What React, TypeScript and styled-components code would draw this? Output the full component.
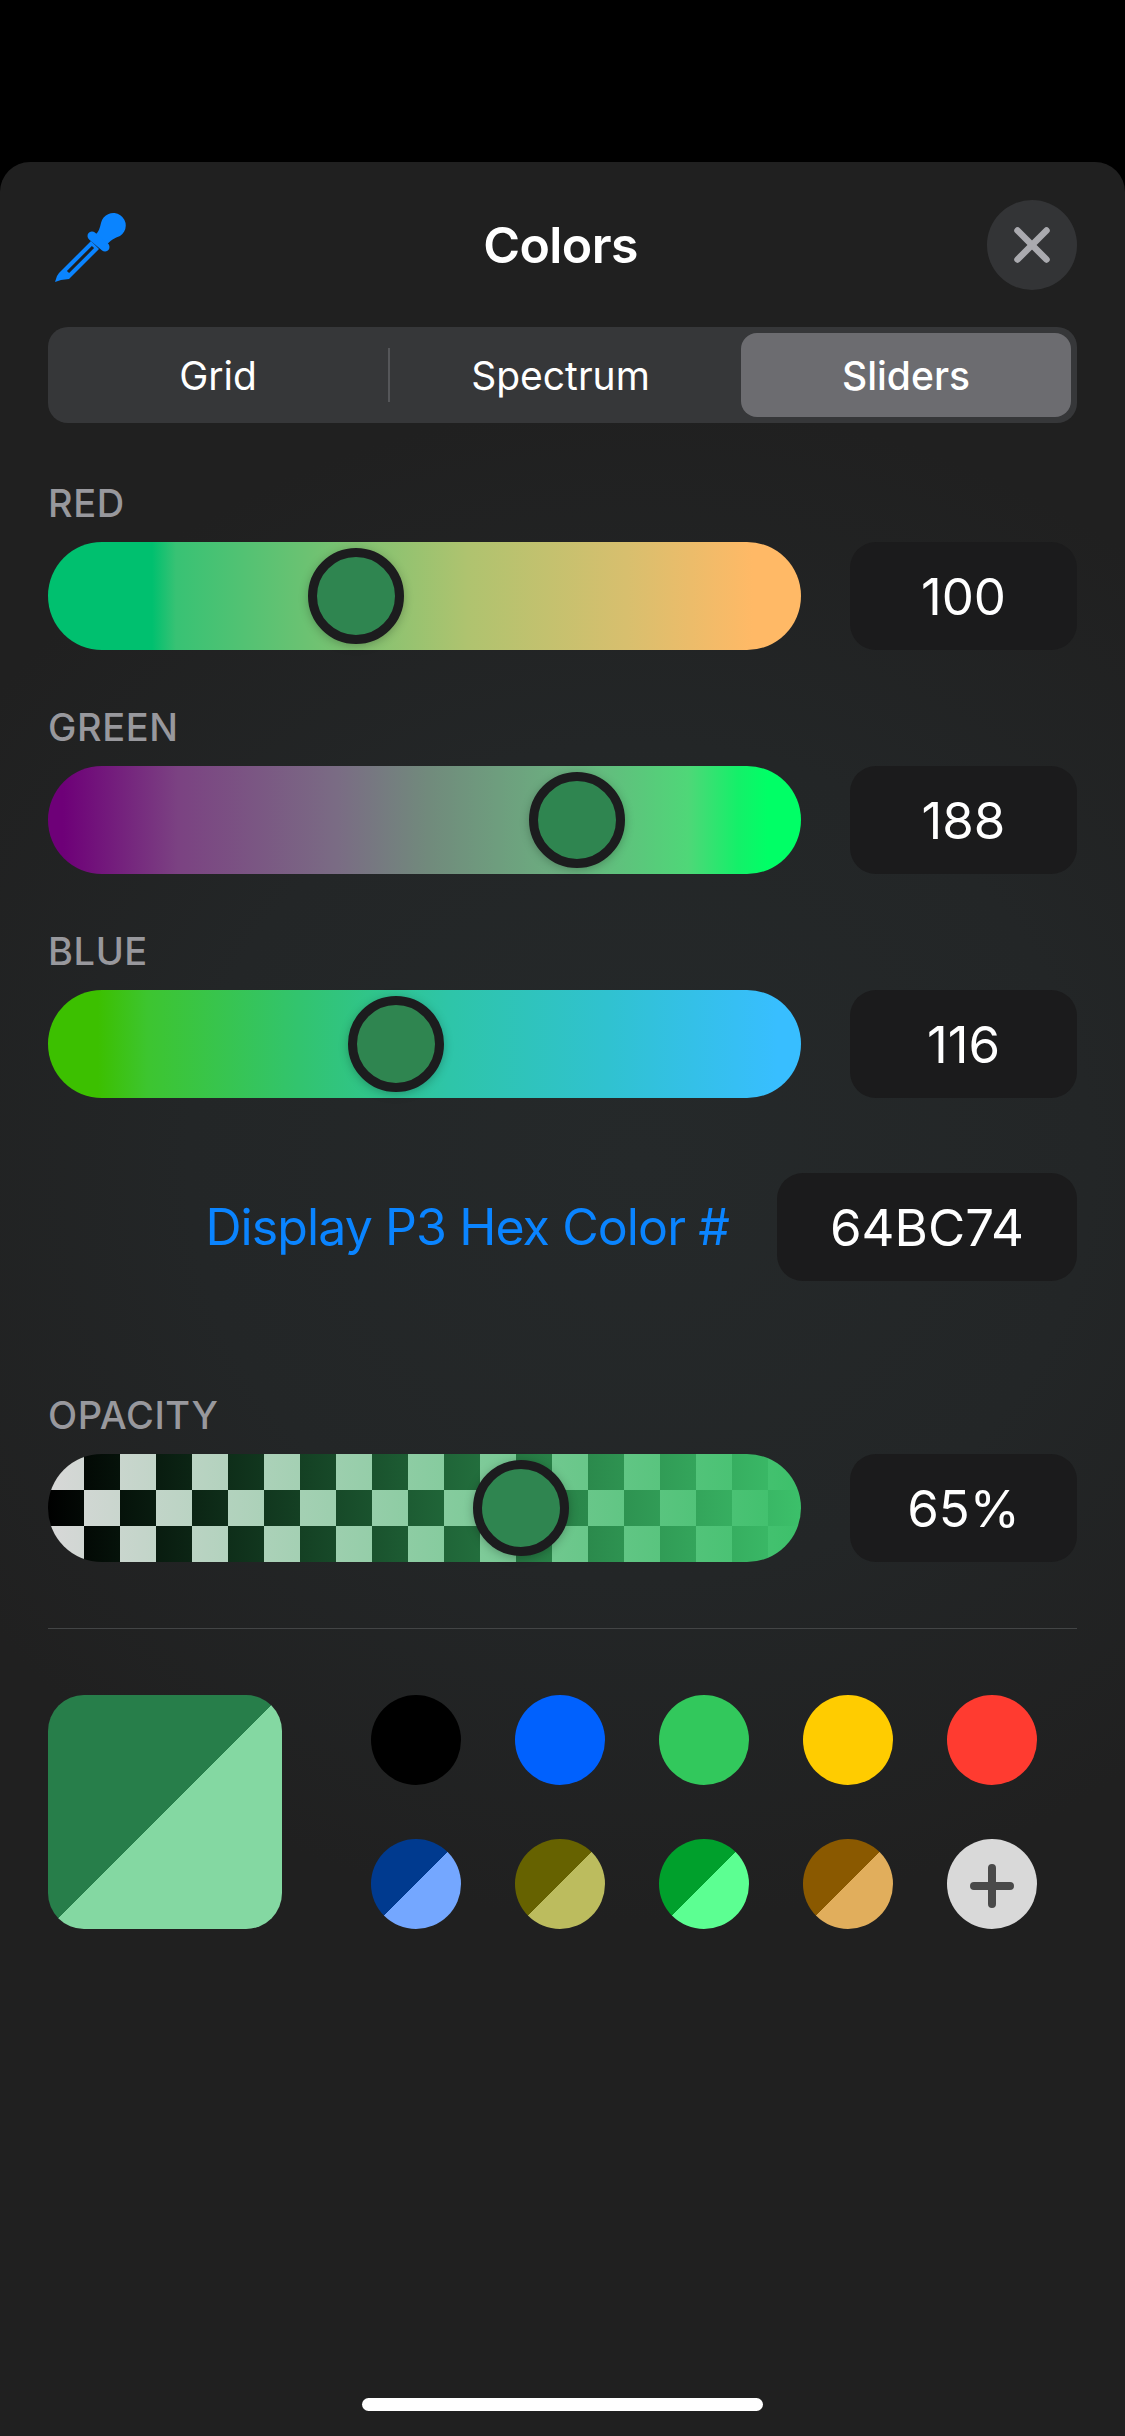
import React from "react";
import styled, { createGlobalStyle } from "styled-components";

const Global = createGlobalStyle`
  html, body { margin: 0; padding: 0; background: #000; }
  body { font-family: Inter, "Liberation Sans", sans-serif; }
`;

const Page = styled.div`
  width: 1125px;
  height: 2436px;
  padding-top: 162px;
  box-sizing: border-box;
  background: #000;
  overflow: hidden;
`;

const Sheet = styled.main`
  height: 2274px;
  box-sizing: border-box;
  padding: 38px 48px 25px;
  border-radius: 30px 30px 0 0;
  background-color: #202020;
  background-image: radial-gradient(ellipse 820px 760px at 640px 1000px, #25292a 0%, #232627 55%, #202020 100%);
  display: flex;
  flex-direction: column;
`;

const Header = styled.header`
  height: 90px;
  display: flex;
  align-items: center;
  justify-content: space-between;
`;

const HeaderSlot = styled.div`
  width: 90px;
  height: 90px;
  display: flex;
  align-items: center;
`;

const Title = styled.h1`
  margin: 0 4px 0 0;
  font-size: 50px;
  font-weight: 600;
  letter-spacing: -0.6px;
  color: #fff;
`;

const CloseButton = styled.button`
  width: 90px;
  height: 90px;
  padding: 0;
  border: 0;
  border-radius: 50%;
  background: #333436;
  display: flex;
  align-items: center;
  justify-content: center;
`;

const Segments = styled.nav`
  margin-top: 37px;
  height: 96px;
  box-sizing: border-box;
  padding: 6px;
  border-radius: 20px;
  background: #363739;
  display: grid;
  grid-template-columns: 336px 351px 330px;
`;

const Segment = styled.div<{ $active?: boolean; $divider?: boolean; $shift?: number }>`
  position: relative;
  box-sizing: border-box;
  padding-right: ${(p) => p.$shift ?? 0}px;
  display: flex;
  align-items: center;
  justify-content: center;
  font-size: 39px;
  font-weight: ${(p) => (p.$active ? 500 : 400)};
  color: #fff;
  border-radius: 16px;
  background: ${(p) => (p.$active ? "#6c6c70" : "transparent")};
  ${(p) =>
    p.$divider &&
    `&::after { content: ""; position: absolute; right: 0; top: 15px; bottom: 15px; width: 2px; background: #555659; }`}
`;

const Group = styled.section<{ $top: number }>`
  margin-top: ${(p) => p.$top}px;
`;

const Label = styled.div`
  height: 40px;
  line-height: 40px;
  margin-bottom: 19px;
  font-size: 38px;
  font-weight: 500;
  letter-spacing: 0.6px;
  color: #98989d;
`;

const SliderRow = styled.div`
  display: flex;
  justify-content: space-between;
`;

const Track = styled.div<{ $bg: string }>`
  position: relative;
  width: 753px;
  height: 108px;
  border-radius: 54px;
  background: ${(p) => p.$bg};
`;

const Thumb = styled.div<{ $x: number }>`
  position: absolute;
  left: ${(p) => p.$x - 48}px;
  top: 54px;
  width: 96px;
  height: 96px;
  box-sizing: border-box;
  transform: translate(-50%, -50%);
  border-radius: 50%;
  border: 9px solid #1c1c1e;
  background: #2f8550;
  box-shadow: 0 2px 10px rgba(0, 0, 0, 0.25);
`;

const ValueBox = styled.div<{ $wide?: boolean }>`
  width: ${(p) => (p.$wide ? 300 : 227)}px;
  height: 108px;
  border-radius: 26px;
  background: #1b1b1c;
  color: #fff;
  font-size: 51px;
  display: flex;
  align-items: center;
  justify-content: center;
`;

const HexRow = styled.div`
  margin-top: 75px;
  display: flex;
  justify-content: flex-end;
  align-items: center;
  gap: 48px;
`;

const HexLabel = styled.div`
  font-size: 50px;
  letter-spacing: -0.9px;
  color: #0a84ff;
`;

const Rule = styled.hr`
  margin: 66px 0 66px;
  border: 0;
  height: 1px;
  background: #434546;
`;

const Bottom = styled.div`
  display: flex;
  gap: 89px;
`;

const BigSwatch = styled.div`
  width: 234px;
  height: 234px;
  border-radius: 36px;
  background: linear-gradient(135deg, #277e4a 50%, #84d8a2 50%);
`;

const Palette = styled.div`
  display: grid;
  grid-template-columns: repeat(5, 90px);
  grid-auto-rows: 90px;
  column-gap: 54px;
  row-gap: 54px;
`;

const Dot = styled.div<{ $a: string; $b?: string }>`
  width: 90px;
  height: 90px;
  border-radius: 50%;
  background: ${(p) =>
    p.$b ? `linear-gradient(135deg, ${p.$a} 50%, ${p.$b} 50%)` : p.$a};
`;

const AddDot = styled.button`
  width: 90px;
  height: 90px;
  padding: 0;
  border: 0;
  border-radius: 50%;
  background: #d9d9d9;
  display: flex;
  align-items: center;
  justify-content: center;
`;

const HomeBar = styled.div`
  margin: auto auto 0;
  width: 401px;
  height: 13px;
  border-radius: 7px;
  background: #fff;
`;

const checker =
  "linear-gradient(to right, rgba(60,192,106,0) 0%, rgba(60,192,106,1) 100%), conic-gradient(#000 25%, #d8d8d8 0 50%, #000 0 75%, #d8d8d8 0) 0 0 / 72px 72px";

const sliders = [
  {
    name: "RED",
    value: "100",
    x: 356,
    bg: "linear-gradient(to right, #00c06f 0, #00c06f 104px, #38c274 128px, #6cc272 260px, #afc36f 420px, #d8bf6e 580px, #ffb966 705px, #ffb966 100%)",
  },
  {
    name: "GREEN",
    value: "188",
    x: 577,
    bg: "linear-gradient(to right, #6e0078 0, #6e0078 15px, #7b4282 130px, #7a6c84 290px, #718a7c 380px, #6bb180 520px, #4fd778 640px, #14f069 690px, #00ff66 720px, #00ff66 100%)",
  },
  {
    name: "BLUE",
    value: "116",
    x: 396,
    bg: "linear-gradient(to right, #3cc000 0, #3cc000 50px, #3dc530 100px, #32c46e 250px, #2ec5a8 400px, #30c2d0 560px, #38beff 730px, #38beff 100%)",
  },
];

const swatches: [string, string?][] = [
  ["#000000"],
  ["#0061fe"],
  ["#32c85c"],
  ["#ffcc00"],
  ["#ff3b30"],
  ["#003a8f", "#74a7ff"],
  ["#666200", "#bcbc5e"],
  ["#00a02c", "#5cff92"],
  ["#8a5900", "#e1ae5c"],
];

const Eyedropper = () => (
  <svg width="80" height="76" viewBox="20 18 80 76" style={{ marginLeft: 2, marginTop: 8 }}>
    <g fill="#0a84ff">
      <path d="M65 42 C69 39 70 34 71 30 A12.5 12.5 0 1 1 90 43 C85 45 80 47 76 53 Z" />
      <path
        fillRule="evenodd"
        d="M61 48 L69 56 L39 86 L31 87 L25 89 L27 83 L29 80 Z M61.9 52.9 L64.1 55.1 L39.1 80.1 L36.9 77.9 Z"
      />
    </g>
    <path d="M62 43 L75 54" stroke="#0a84ff" strokeWidth="9" strokeLinecap="round" />
  </svg>
);

const CloseIcon = () => (
  <svg width="40" height="40" viewBox="0 0 40 40">
    <path d="M5.5 5.5 L34.5 34.5 M34.5 5.5 L5.5 34.5" stroke="#aaaaaf" strokeWidth="6.5" strokeLinecap="round" />
  </svg>
);

const PlusIcon = () => (
  <svg width="44" height="44" viewBox="0 0 44 44" style={{ marginTop: 3 }}>
    <path d="M22 4 V40 M4 22 H40" stroke="#4a4a4a" strokeWidth="8" strokeLinecap="round" />
  </svg>
);

export default function App() {
  return (
    <Page>
      <Global />
      <Sheet>
        <Header>
          <HeaderSlot>
            <Eyedropper />
          </HeaderSlot>
          <Title>Colors</Title>
          <CloseButton aria-label="Close">
            <CloseIcon />
          </CloseButton>
        </Header>

        <Segments>
          <Segment $divider $shift={8}>Grid</Segment>
          <Segment $shift={10}>Spectrum</Segment>
          <Segment $active>Sliders</Segment>
        </Segments>

        {sliders.map((s, i) => (
          <Group key={s.name} $top={i === 0 ? 60 : 57}>
            <Label>{s.name}</Label>
            <SliderRow>
              <Track $bg={s.bg}>
                <Thumb $x={s.x} />
              </Track>
              <ValueBox>{s.value}</ValueBox>
            </SliderRow>
          </Group>
        ))}

        <HexRow>
          <HexLabel>Display P3 Hex Color #</HexLabel>
          <ValueBox $wide>64BC74</ValueBox>
        </HexRow>

        <Group $top={114}>
          <Label>OPACITY</Label>
          <SliderRow>
            <Track $bg={checker}>
              <Thumb $x={521} />
            </Track>
            <ValueBox>65%</ValueBox>
          </SliderRow>
        </Group>

        <Rule />

        <Bottom>
          <BigSwatch />
          <Palette>
            {swatches.map(([a, b]) => (
              <Dot key={a} $a={a} $b={b} />
            ))}
            <AddDot aria-label="Add">
              <PlusIcon />
            </AddDot>
          </Palette>
        </Bottom>

        <HomeBar />
      </Sheet>
    </Page>
  );
}
